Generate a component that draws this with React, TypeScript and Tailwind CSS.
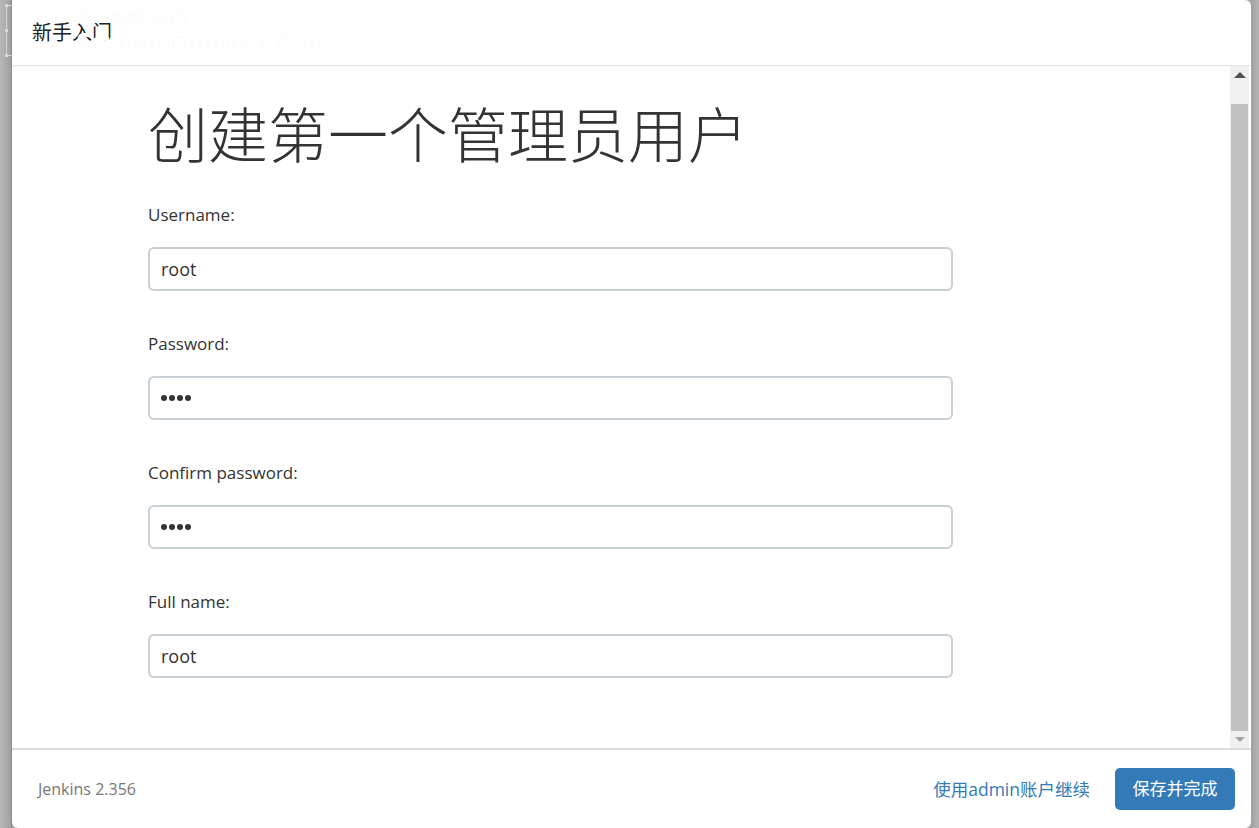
import React from "react";

const FONT = { fontFamily: '"Open Sans", "Noto Sans CJK SC", sans-serif' };

function Field({ label, value, password }: { label: string; value: string; password?: boolean }) {
  return (
    <div className="flex flex-col">
      <div className="text-[17px] leading-[22px] text-[#333]">{label}</div>
      <div className="mt-[21px] w-[805px] h-[44px] rounded-[6px] border-2 border-[#c8d0d3] bg-white flex items-center pl-[11px]">
        {password ? (
          <div className="flex gap-[2px] items-center">
            {[0, 1, 2, 3].map((i) => (
              <span key={i} className="w-[6px] h-[6px] rounded-full bg-[#333]" />
            ))}
          </div>
        ) : (
          <span className="text-[18px] text-[#333]">{value}</span>
        )}
      </div>
    </div>
  );
}

export default function App() {
  return (
    <div className="w-[1259px] h-[828px] flex bg-[#a9a9a9] overflow-hidden" style={FONT}>
      <div className="w-[12px] h-full bg-gradient-to-r from-[#b8b8b8] to-[#a0a0a0] border-r border-[#8c8c8c]" />
      <div className="relative flex-1 flex flex-col bg-white rounded-r-[6px] rounded-bl-[6px]">
        {/* header */}
        <div className="h-[66px] border-b border-[#e5e5e5] flex items-center pl-[20px]">
          <span className="text-[20px] text-[#222] leading-none">新手入门</span>
        </div>
        {/* body */}
        <div className="flex-1 flex min-h-0">
          <div className="flex-1 pl-[136px] pt-[36px]">
            <h1 className="text-[60px] leading-[66px] text-[#333] font-light">创建第一个管理员用户</h1>
            <div className="mt-[36px] flex flex-col gap-[42px]">
              <Field label="Username:" value="root" />
              <Field label="Password:" value="" password />
              <Field label="Confirm password:" value="" password />
              <Field label="Full name:" value="root" />
            </div>
          </div>
          <div className="w-[19px] mr-[2px] bg-[#f0f0f0] flex flex-col items-center">
            <div className="h-[17px] flex items-center justify-center">
              <div className="w-0 h-0 border-l-[6px] border-r-[6px] border-b-[6px] border-l-transparent border-r-transparent border-b-[#505050]" />
            </div>
            <div className="mt-[21px] w-[17px] flex-1 bg-[#c1c1c1]" />
            <div className="h-[17px] flex items-center justify-center">
              <div className="w-0 h-0 border-l-[5px] border-r-[5px] border-t-[5px] border-l-transparent border-r-transparent border-t-[#a3a3a3]" />
            </div>
          </div>
        </div>
        {/* footer */}
        <div className="h-[80px] border-t-2 border-[#dcdcdc] flex items-center pl-[26px] pr-[16px]">
          <span className="text-[16px] text-[#777]">Jenkins 2.356</span>
          <div className="ml-auto flex items-center gap-[25px]">
            <span className="text-[17.5px] text-[#337ab7]">使用admin账户继续</span>
            <button className="w-[120px] h-[42px] rounded-[5px] bg-[#337ab7] text-white text-[17px]">保存并完成</button>
          </div>
        </div>
        {/* watermark overlay */}
        <div className="absolute left-[63px] top-[5px] pointer-events-none italic font-bold text-white leading-none" style={{ textShadow: "0 0 3px rgba(0,0,0,0.035)" }}>
          <div className="text-[21px]">Apowersoft</div>
          <div className="text-[27px] mt-[2px]">Screen Capture Pro</div>
        </div>
      </div>
      <div className="w-[8px] h-full bg-gradient-to-r from-[#a0a0a0] to-[#b5b5b5]" />
      {/* capture bracket overlay */}
      <div className="absolute left-[6px] top-[5px] w-[7px] h-[51px] border-l border-t border-b border-[#d8d8d8] pointer-events-none">
        <div className="absolute -left-[2px] -top-[2px] w-[3px] h-[3px] bg-[#d8d8d8]" />
        <div className="absolute -left-[2px] top-[23px] w-[3px] h-[3px] bg-[#d8d8d8]" />
        <div className="absolute -left-[2px] -bottom-[2px] w-[3px] h-[3px] bg-[#d8d8d8]" />
      </div>
    </div>
  );
}
